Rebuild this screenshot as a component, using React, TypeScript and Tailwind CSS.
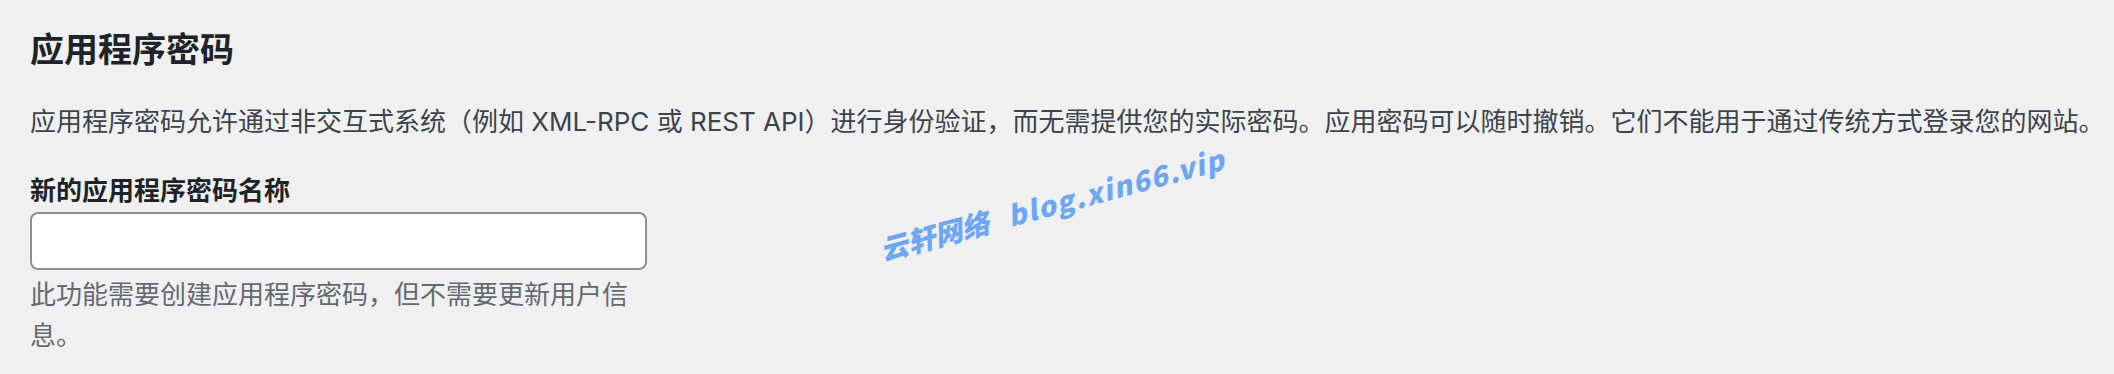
import React from 'react';

const font = { fontFamily: 'Inter, "Noto Sans CJK SC", sans-serif' };

const App: React.FC = () => {
  return (
    <div className="relative h-[374px] w-full overflow-hidden bg-[#f0f0f1] pl-[30px] pt-[30px]" style={font}>
      <h2 className="text-[34px] leading-[40px] font-semibold text-[#1d2327]">应用程序密码</h2>
      <p className="mt-[32px] text-[26px] leading-[39px] text-[#3c434a] whitespace-nowrap">
        应用程序密码允许通过非交互式系统（例如 XML-RPC 或 REST API）进行身份验证，而无需提供您的实际密码。应用密码可以随时撤销。它们不能用于通过传统方式登录您的网站。
      </p>
      <div className="mt-[30px] w-[620px]">
        <label htmlFor="new_application_password_name" className="block text-[26px] leading-[39px] font-bold text-[#1d2327]">
          新的应用程序密码名称
        </label>
        <input
          id="new_application_password_name"
          type="text"
          className="mt-[2px] block h-[58px] w-[617px] rounded-[8px] border-2 border-[#8c8f94] bg-white px-4 text-[26px] outline-none"
        />
        <p className="mt-[4px] text-[26px] leading-[41px] text-[#646970]">
          此功能需要创建应用程序密码，但不需要更新用户信息。
        </p>
      </div>

      {/* watermark */}
      <div
        className="pointer-events-none absolute left-[884px] top-[234px] origin-bottom-left -rotate-[15deg] whitespace-nowrap text-[28px] leading-[30px] font-black italic text-[#6ea6f2]"
        style={{ fontFamily: '"Noto Sans CJK SC", sans-serif' }}
      >
        云轩网络<span className="ml-[20px] tracking-[1.5px]">blog.xin66.vip</span>
      </div>
    </div>
  );
};

export default App;
